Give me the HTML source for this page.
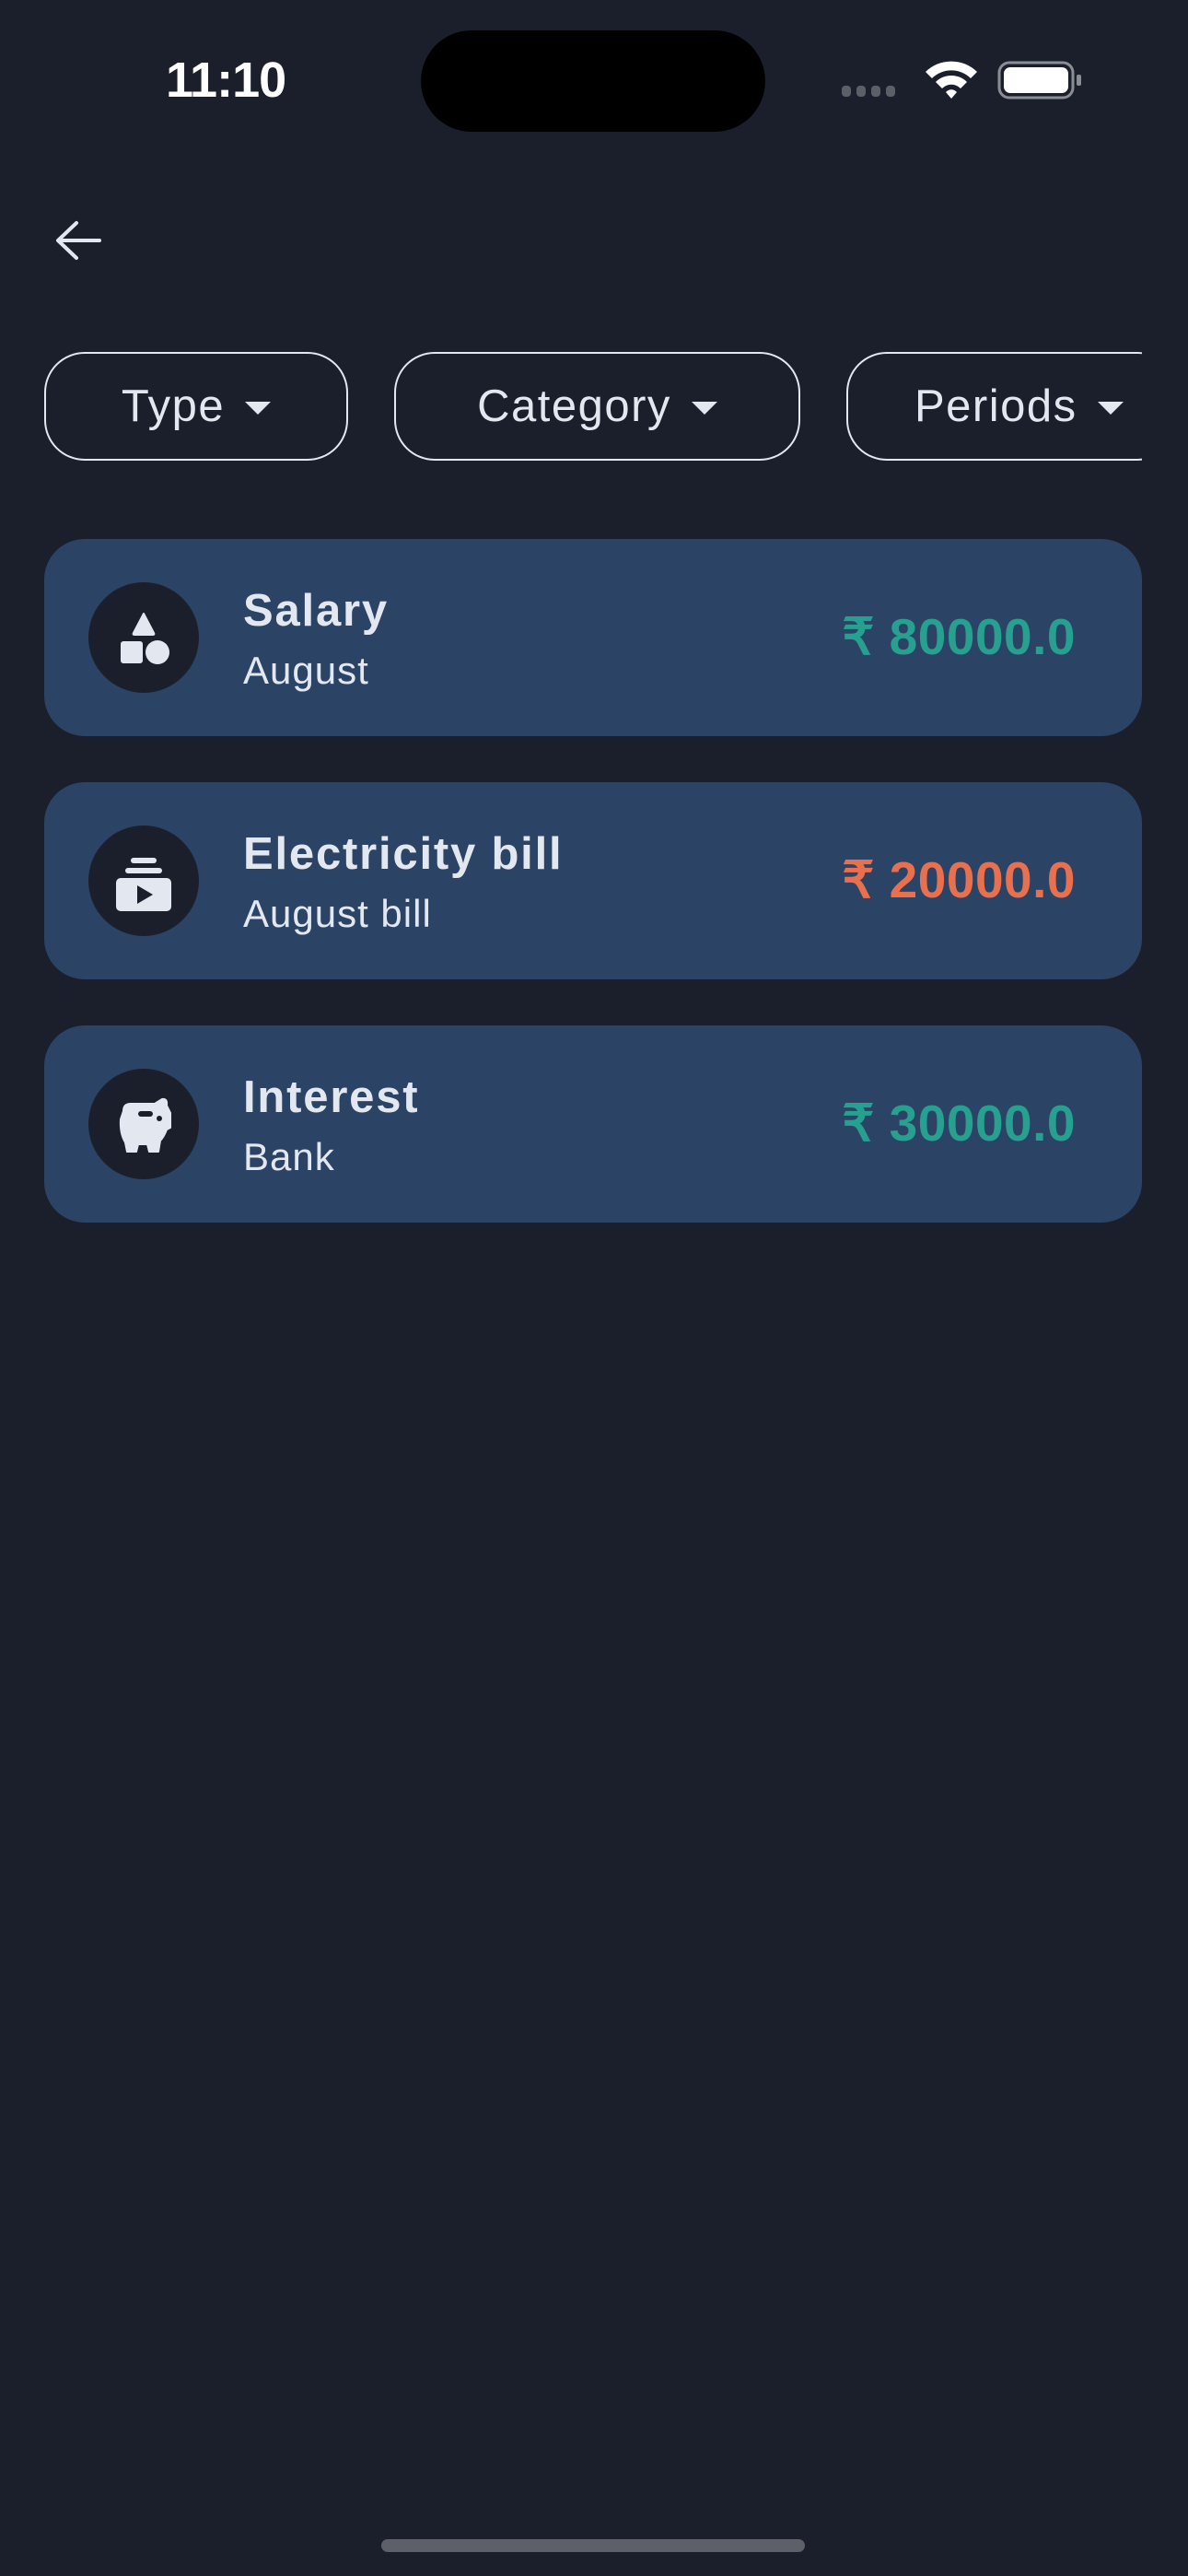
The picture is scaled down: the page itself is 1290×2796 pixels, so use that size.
<!DOCTYPE html>
<html><head><meta charset="utf-8"><style>
*{margin:0;padding:0;box-sizing:border-box}
html,body{width:1290px;height:2796px;background:#1b1f2b;overflow:hidden;font-family:"Liberation Sans",sans-serif;color:#e3e8f0}
.abs{position:absolute}
.time{left:180px;top:56px;font-size:54px;font-weight:bold;color:#fff;letter-spacing:-1px}
.island{left:457px;top:33px;width:374px;height:110px;background:#000;border-radius:55px}
.chip{position:absolute;top:382px;height:118px;border:2.5px solid #e3e8f0;border-radius:44px;font-size:49px;letter-spacing:1.5px;display:flex;align-items:center;justify-content:center;gap:22px}
.chip .tri{width:0;height:0;border-left:14px solid transparent;border-right:14px solid transparent;border-top:14px solid #e3e8f0;margin-top:4px}
.card{position:absolute;left:48px;width:1192px;height:214px;background:#2b4365;border-radius:44px}
.ic{position:absolute;left:48px;top:47px;width:120px;height:120px;border-radius:50%;background:#1b1f2b}
.ic svg{position:absolute;left:0;top:0}
.t{position:absolute;left:216px;top:50px;font-size:49px;font-weight:bold;letter-spacing:1.8px}
.s{position:absolute;left:216px;top:119px;font-size:42px;letter-spacing:1px}
.amt{position:absolute;right:72px;top:74px;font-size:55px;font-weight:bold;letter-spacing:.5px}
</style></head><body>
<div class="abs time">11:10</div>
<div class="abs island"></div>
<svg class="abs" style="left:912px;top:92px" width="70" height="14"><g fill="#5b5f68"><rect x="2" y="1" width="10" height="12" rx="4"/><rect x="18" y="1" width="10" height="12" rx="4"/><rect x="34" y="1" width="10" height="12" rx="4"/><rect x="50" y="1" width="10" height="12" rx="4"/></g></svg>
<svg class="abs" style="left:1002px;top:62px" width="62" height="46" viewBox="0 0 62 46"><path d="M3 16 A40 40 0 0 1 59 16 L52 23 A30 30 0 0 0 10 23Z M14 27 A24 24 0 0 1 48 27 L41 34 A14 14 0 0 0 21 34Z M25 38 A8 8 0 0 1 37 38 L31 45Z" fill="#fff"/></svg>
<svg class="abs" style="left:1083px;top:66px" width="94" height="42"><rect x="2" y="2" width="80" height="38" rx="11" fill="none" stroke="#8a8d94" stroke-width="3"/><rect x="7" y="7" width="70" height="28" rx="7" fill="#fff"/><rect x="86" y="15" width="5" height="12" rx="2" fill="#8a8d94"/></svg>
<svg class="abs" style="left:58px;top:238px" width="54" height="46" viewBox="0 0 54 46"><path d="M50 23H6M25 4L5 23L25 42" fill="none" stroke="#e3e8f0" stroke-width="4" stroke-linecap="round" stroke-linejoin="round"/></svg>

<div class="chip" style="left:48px;width:330px">Type<span class="tri"></span></div>
<div class="chip" style="left:428px;width:441px">Category<span class="tri"></span></div>
<div class="chip" style="left:919px;width:360px;justify-content:flex-start;padding-left:72px">Periods<span class="tri"></span></div>
<div class="abs" style="left:1240px;top:370px;width:50px;height:140px;background:#1b1f2b"></div>

<div class="card" style="top:585px">
 <div class="ic"><svg width="120" height="120"><path d="M60 34 L71 55 Q72 57 70 57 H50 Q48 57 49 55Z" fill="#e3e8f0" stroke="#e3e8f0" stroke-width="2" stroke-linejoin="round"/><rect x="35" y="64" width="24" height="24" rx="3" fill="#e3e8f0"/><circle cx="75" cy="76" r="13" fill="#e3e8f0"/></svg></div>
 <div class="t">Salary</div><div class="s">August</div>
 <div class="amt" style="color:#27a090">₹ 80000.0</div>
</div>
<div class="card" style="top:849px">
 <div class="ic"><svg width="120" height="120"><rect x="46" y="35" width="28" height="6" rx="3" fill="#e3e8f0"/><rect x="40" y="46" width="40" height="6" rx="3" fill="#e3e8f0"/><rect x="30" y="57" width="60" height="36" rx="5" fill="#e3e8f0"/><path d="M53 65 L70 75 L53 85Z" fill="#1b1f2b"/></svg></div>
 <div class="t">Electricity bill</div><div class="s">August bill</div>
 <div class="amt" style="color:#e8704f">₹ 20000.0</div>
</div>
<div class="card" style="top:1113px">
 <div class="ic"><svg width="120" height="120"><path d="M38 46 Q38 38 46 38 H72 L80 33 Q86 32 85 40 L89 48 V64 L85 66 Q82 74 78 78 L76 90 H66 L64 82 H54 L52 90 H42 L40 80 Q34 70 35 55Z" fill="#e3e8f0" stroke="#e3e8f0" stroke-width="2" stroke-linejoin="round"/><rect x="54" y="46" width="16" height="6" rx="3" fill="#1b1f2b"/><circle cx="77" cy="54" r="3" fill="#1b1f2b"/></svg></div>
 <div class="t">Interest</div><div class="s">Bank</div>
 <div class="amt" style="color:#27a090">₹ 30000.0</div>
</div>

<div class="abs" style="left:414px;top:2756px;width:460px;height:14px;border-radius:7px;background:#5d6068"></div>
</body></html>
